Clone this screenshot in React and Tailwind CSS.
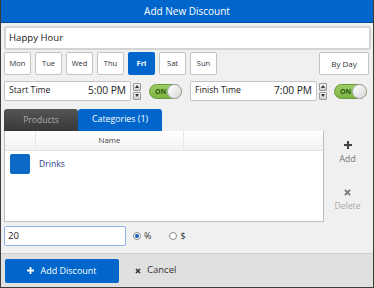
import React from 'react';

const font = { fontFamily: '"Open Sans", "Noto Sans", sans-serif' };

const days = ['Mon', 'Tue', 'Wed', 'Thu', 'Fri', 'Sat', 'Sun'];

const Spinner = () => (
  <div className="flex flex-col gap-[1px] w-[8px] h-[17px]">
    <div className="flex-1 bg-gradient-to-b from-[#f4f4f4] to-[#cfcfcf] border border-[#9a9a9a] rounded-[1px] flex items-center justify-center">
      <svg width="4" height="3" viewBox="0 0 4 3"><path d="M0 3 L2 0 L4 3 Z" fill="#333" /></svg>
    </div>
    <div className="flex-1 bg-gradient-to-b from-[#f4f4f4] to-[#cfcfcf] border border-[#9a9a9a] rounded-[1px] flex items-center justify-center">
      <svg width="4" height="3" viewBox="0 0 4 3"><path d="M0 0 L2 3 L4 0 Z" fill="#333" /></svg>
    </div>
  </div>
);

const Toggle = () => (
  <div className="relative w-[33px] h-[15px] rounded-full bg-gradient-to-b from-[#9ccc65] to-[#7cb342] border border-[#6a9a3a] flex items-center">
    <span className="ml-[5px] text-[7px] font-bold text-[#2d5a12] leading-none">ON</span>
    <div className="absolute right-[-1px] top-[-1px] w-[15px] h-[15px] rounded-full bg-gradient-to-br from-white to-[#d8d8d8] border border-[#aaa]" />
  </div>
);

const TimeField = ({ label, value, w }) => (
  <div className={`flex items-center bg-white border border-[#c4c4c4] rounded-[2px] h-[20px] px-[4px] ${w}`}>
    <span className="text-[8.7px] text-[#222]">{label}</span>
    <span className="ml-auto text-[10.2px] text-[#222]">{value}</span>
  </div>
);

export default function App() {
  return (
    <div style={font} className="w-[374px] h-[288px] flex flex-col bg-[#f0f0f0] border-x border-b border-[#3c3c3c] overflow-hidden">
      <div className="h-[23px] shrink-0 bg-[#0066cc] border-b border-[#004a99] flex items-center justify-center text-white text-[10px]">
        Add New Discount
      </div>

      <div className="flex flex-col px-[3px] pr-[2px] flex-1">
        <div className="mt-[3px] h-[24px] bg-white border-2 border-[#d4d4d4] rounded-[3px] flex items-center px-[3px] text-[9.6px] text-[#222]">
          Happy Hour
        </div>

        <div className="mt-[2px] flex items-center gap-[4px] h-[23px]">
          {days.map((d) => (
            <div
              key={d}
              className={
                d === 'Fri'
                  ? 'w-[27px] h-[23px] rounded-[2px] bg-[#0066cc] text-white font-bold text-[7.5px] flex items-center justify-center'
                  : 'w-[27px] h-[23px] rounded-[2px] bg-white border border-[#c4c4c4] text-[#333] text-[7.5px] flex items-center justify-center'
              }
            >
              {d}
            </div>
          ))}
          <div className="ml-auto mr-[2px] w-[50px] h-[23px] rounded-[2px] bg-white border border-[#c4c4c4] text-[#333] text-[8px] flex items-center justify-center">
            By Day
          </div>
        </div>

        <div className="mt-[6px] flex items-center h-[20px]">
          <TimeField label="Start Time" value="5:00 PM" w="w-[127px]" />
          <div className="ml-[2px]"><Spinner /></div>
          <div className="ml-[8px]"><Toggle /></div>
          <div className="ml-[8px]"><TimeField label="Finish Time" value="7:00 PM" w="w-[127px]" /></div>
          <div className="ml-[2px]"><Spinner /></div>
          <div className="ml-[7px]"><Toggle /></div>
        </div>

        <div className="mt-[8px] flex">
          <div className="flex flex-col w-[320px]">
            <div className="flex h-[22px]">
              <div className="w-[74px] rounded-t-[3px] bg-gradient-to-b from-[#555] to-[#383838] text-[#aaa] text-[8.6px] flex items-center justify-center">
                Products
              </div>
              <div className="w-[84px] rounded-t-[3px] bg-[#0066cc] text-white text-[8.8px] flex items-center justify-center">
                Categories (1)
              </div>
            </div>
            <div className="h-[91px] bg-white border border-[#bdbdbd] border-t-0 flex flex-col">
              <div className="h-[20px] flex bg-gradient-to-b from-white to-[#f2f2f2] border-b border-[#e2e2e2] text-[7.8px] text-[#444]">
                <div className="w-[31px] border-r border-[#e6e6e6]" />
                <div className="w-[148px] border-r border-[#e6e6e6] flex items-center justify-center">Name</div>
                <div className="flex-1" />
              </div>
              <div className="flex items-center h-[24px] mt-[1px]">
                <div className="ml-[5px] w-[20px] h-[20px] rounded-[2px] bg-[#0a6ac6]" />
                <span className="ml-[9px] text-[8.6px] text-[#2a3f8c]">Drinks</span>
              </div>
            </div>
          </div>

          <div className="flex-1 flex flex-col items-center pt-[32px]">
            <svg width="8" height="8" viewBox="0 0 9 9"><path d="M3.3 0h2.4v3.3H9v2.4H5.7V9H3.3V5.7H0V3.3h3.3z" fill="#444" /></svg>
            <span className="text-[9px] text-[#777] leading-none mt-[5px]">Add</span>
            <svg className="mt-[26px]" width="7" height="7" viewBox="0 0 8 8"><path d="M1 1 L7 7 M7 1 L1 7" stroke="#777" strokeWidth="2" /></svg>
            <span className="text-[8.6px] text-[#aaa] leading-none mt-[6px]">Delete</span>
          </div>
        </div>

        <div className="mt-[4px] flex items-center h-[20px]">
          <div className="w-[122px] h-[20px] bg-white border border-[#8fb3e8] rounded-[2px] flex items-center px-[3px] text-[9.5px] text-[#222]">
            20
          </div>
          <div className="ml-[7px] w-[8px] h-[8px] rounded-full border border-[#8a8a8a] bg-white flex items-center justify-center">
            <div className="w-[4px] h-[4px] rounded-full bg-[#1a5fb4]" />
          </div>
          <span className="ml-[3px] text-[9px] text-[#333]">%</span>
          <div className="ml-[18px] w-[8px] h-[8px] rounded-full border border-[#8a8a8a] bg-white" />
          <span className="ml-[3px] text-[9px] text-[#333]">$</span>
        </div>
      </div>

      <div className="h-[34px] shrink-0 bg-[#e0e0e0] border-t border-[#cfcfcf] flex items-center px-[4px]">
        <div className="w-[114px] h-[24px] rounded-[2px] bg-[#0066cc] flex items-center justify-center text-white text-[9px]">
          <svg width="7" height="7" viewBox="0 0 7 7" className="mr-[6px]"><path d="M2.6 0h1.8v2.6H7v1.8H4.4V7H2.6V4.4H0V2.6h2.6z" fill="#fff" /></svg>
          Add Discount
        </div>
        <div className="ml-[16px] flex items-center text-[9.5px] text-[#333]">
          <svg width="6" height="6" viewBox="0 0 6 6" className="mr-[6px]"><path d="M1 1 L5 5 M5 1 L1 5" stroke="#333" strokeWidth="1.6" /></svg>
          Cancel
        </div>
      </div>
    </div>
  );
}
